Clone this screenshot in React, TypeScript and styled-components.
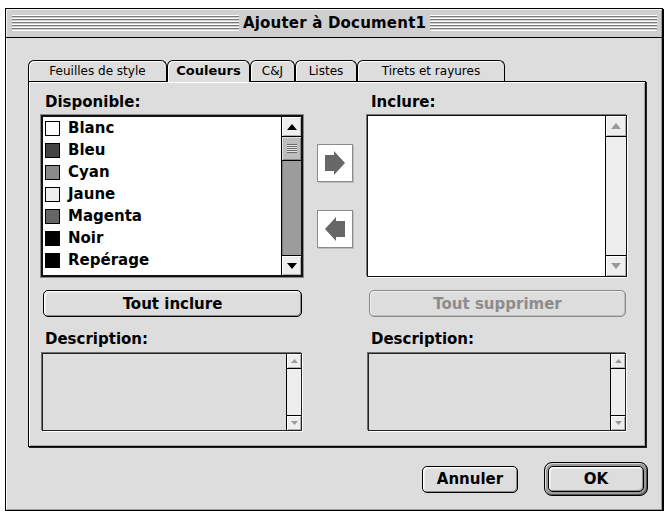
import React from "react";
import styled, { createGlobalStyle } from "styled-components";

const Global = createGlobalStyle`
  html, body { margin: 0; padding: 0; background: #ffffff; }
  body { font-family: "DejaVu Sans", "Liberation Sans", sans-serif; color: #000; }
  #root { padding: 8px 0 0 5px; }
  * { box-sizing: border-box; }
`;

const Window = styled.div`
  width: 658px;
  height: 503px;
  border: 1px solid #000;
  background: #dddddd;
  box-shadow: 1px 1px 0 #000, inset 1px 1px 0 #ffffff, inset -1px -1px 0 #9a9a9a;
  display: flex;
  flex-direction: column;
`;

const TitleBar = styled.div`
  height: 29px;
  flex: none;
  border-bottom: 1px solid #000;
  background: #cfcfcf;
  box-shadow: inset 1px 1px 0 #f2f2f2, inset -1px 0 0 #9a9a9a;
  display: flex;
  align-items: center;
  padding: 0 5px 0 6px;
  gap: 3px;
`;

const Stripes = styled.div`
  flex: 1;
  height: 16px;
  background: repeating-linear-gradient(
    to bottom,
    #ffffff 0px,
    #ffffff 1px,
    #7a7a7a 1px,
    #7a7a7a 2px,
    #cfcfcf 2px,
    #cfcfcf 3px
  );
`;

const Title = styled.div`
  font-weight: bold;
  font-size: 15px;
  letter-spacing: 0.2px;
  line-height: 18px;
  padding: 0 1px;
  white-space: nowrap;
`;

const Content = styled.div`
  flex: 1;
  display: flex;
  flex-direction: column;
  padding: 22px 16px 14px 22px;
`;

const TabRow = styled.div`
  display: flex;
  align-items: flex-end;
  height: 21px;
`;

const Tab = styled.div<{ $w: number; $active?: boolean }>`
  width: ${(p) => p.$w}px;
  height: ${(p) => (p.$active ? 22 : 21)}px;
  margin-bottom: ${(p) => (p.$active ? -1 : 0)}px;
  position: relative;
  z-index: ${(p) => (p.$active ? 1 : 0)};
  border: 1px solid #000;
  border-bottom: none;
  border-radius: 6px 6px 0 0;
  background: #dddddd;
  box-shadow: inset 1px 1px 0 #ffffff;
  display: flex;
  align-items: center;
  justify-content: center;
  padding-bottom: ${(p) => (p.$active ? 2 : 1)}px;
  font-size: ${(p) => (p.$active ? 13 : 12)}px;
  font-weight: ${(p) => (p.$active ? "bold" : "normal")};
  white-space: nowrap;
`;

const Panel = styled.div`
  height: 366px;
  border: 1px solid #000;
  box-shadow: 1px 1px 0 #222222, inset 1px 1px 0 #ffffff, inset -1px -1px 0 #a8a8a8;
  padding: 11px 17px 15px 12px;
  display: flex;
`;

const Column = styled.div<{ $w: number }>`
  width: ${(p) => p.$w}px;
  display: flex;
  flex-direction: column;
`;

const ArrowColumn = styled.div`
  width: 64px;
  display: flex;
  flex-direction: column;
  align-items: center;
  padding-top: 51px;
  gap: 28px;
`;

const Label = styled.div<{ $top?: number }>`
  font-weight: bold;
  font-size: 15px;
  line-height: 18px;
  margin-left: 4px;
  margin-top: ${(p) => p.$top ?? 0}px;
`;

const ListBox = styled.div<{ $focused?: boolean }>`
  height: 162px;
  margin-top: 4px;
  display: flex;
  background: #ffffff;
  border: ${(p) => (p.$focused ? "2px solid #111" : "1px solid #111")};
  box-shadow: ${(p) =>
    p.$focused ? "0 0 0 1px #8a8a8a" : "-1px -1px 0 #7a7a7a, 1px 1px 0 #ffffff"};
`;

const Items = styled.div`
  flex: 1;
  padding-left: 2px;
  display: flex;
  flex-direction: column;
`;

const Item = styled.div`
  height: 22px;
  display: flex;
  align-items: center;
  gap: 8px;
  font-weight: bold;
  font-size: 15px;
  white-space: nowrap;
`;

const Swatch = styled.span<{ $c: string }>`
  width: 15px;
  height: 15px;
  border: 1px solid #000;
  background: ${(p) => p.$c};
  flex: none;
`;

const ScrollBar = styled.div<{ $w: number }>`
  width: ${(p) => p.$w}px;
  flex: none;
  border-left: 1px solid #000;
  display: flex;
  flex-direction: column;
  background: #eeeeee;
`;

const ScrollArrow = styled.div<{ $h: number; $pos: "top" | "bottom" }>`
  height: ${(p) => p.$h}px;
  flex: none;
  background: #eeeeee;
  ${(p) => (p.$pos === "top" ? "border-bottom: 1px solid #000;" : "border-top: 1px solid #000;")}
  box-shadow: inset 1px 1px 0 #ffffff, inset -1px -1px 0 #b0b0b0;
  display: flex;
  align-items: center;
  justify-content: center;
`;

const Thumb = styled.div`
  height: 24px;
  flex: none;
  border-bottom: 1px solid #000;
  background: #bdbdbd;
  box-shadow: inset 1px 1px 0 #e0e0e0, inset -1px -1px 0 #888888;
  display: flex;
  align-items: center;
  justify-content: center;
`;

const Grip = styled.div`
  width: 10px;
  height: 9px;
  background: repeating-linear-gradient(
    to bottom,
    #6a6a6a 0px,
    #6a6a6a 1px,
    #e6e6e6 1px,
    #e6e6e6 2px
  );
`;

const Track = styled.div<{ $active?: boolean }>`
  flex: 1;
  background: ${(p) => (p.$active ? "#9c9c9c" : "#eeeeee")};
  box-shadow: ${(p) => (p.$active ? "inset 1px 0 0 #7a7a7a" : "none")};
`;

const PushButton = styled.button<{ $w?: number; $h?: number }>`
  width: ${(p) => (p.$w ? `${p.$w}px` : "auto")};
  height: ${(p) => p.$h ?? 27}px;
  border: 1px solid #000;
  border-radius: 5px;
  background: #dddddd;
  box-shadow: inset 1px 1px 0 #ffffff, inset -1px -1px 0 #8e8e8e, inset 2px 2px 0 #ececec;
  font-family: "DejaVu Sans", "Liberation Sans", sans-serif;
  font-weight: bold;
  font-size: 15px;
  color: #000;
  padding: 0;
  &:disabled {
    border-color: #8a8a8a;
    color: #8c8c8c;
    box-shadow: inset 1px 1px 0 #eeeeee, inset -1px -1px 0 #bcbcbc;
  }
`;

const WideButton = styled(PushButton)`
  margin: 13px 1px 0 2px;
`;

const ArrowButton = styled.div`
  width: 36px;
  height: 38px;
  background: #ffffff;
  border: 1px solid #8c8c8c;
  box-shadow: 1px 1px 0 #bdbdbd;
  display: flex;
  align-items: center;
  justify-content: center;
`;

const DescBox = styled.div`
  height: 78px;
  margin: 5px 1px 0 1px;
  display: flex;
  background: #dddddd;
  border: 1px solid #222;
  box-shadow: -1px -1px 0 #6e6e6e, 1px 1px 0 #ffffff;
`;

const DescArea = styled.div`
  flex: 1;
`;

const Footer = styled.div`
  display: flex;
  justify-content: flex-end;
  align-items: center;
  gap: 26px;
  margin-top: 15px;
  margin-right: -2px;
  height: 34px;
`;

const DefaultRing = styled.div`
  width: 104px;
  height: 34px;
  border: 1px solid #000;
  border-radius: 8px;
  padding: 3px;
  background: #9a9a9a;
  box-shadow: inset 1px 1px 0 #d8d8d8, inset -1px -1px 0 #555555;
  display: flex;
`;

const Tri = ({ dir, w, h, color }: { dir: "up" | "down"; w: number; h: number; color: string }) => (
  <svg width={w} height={h} viewBox={`0 0 ${w} ${h}`}>
    <polygon
      points={dir === "up" ? `0,${h} ${w / 2},0 ${w},${h}` : `0,0 ${w / 2},${h} ${w},0`}
      fill={color}
    />
  </svg>
);

const BlockArrow = ({ dir }: { dir: "left" | "right" }) => (
  <svg width={20} height={24} viewBox="0 0 20 24">
    <polygon
      points="0,4 9,4 9,0 20,12 9,24 9,20 0,20"
      fill="#676767"
      transform={dir === "left" ? "translate(20,0) scale(-1,1)" : undefined}
    />
  </svg>
);

const colors = [
  { name: "Blanc", c: "#ffffff" },
  { name: "Bleu", c: "#444444" },
  { name: "Cyan", c: "#8a8a8a" },
  { name: "Jaune", c: "#eeeeee" },
  { name: "Magenta", c: "#666666" },
  { name: "Noir", c: "#000000" },
  { name: "Repérage", c: "#000000" },
];

const tabs = [
  { label: "Feuilles de style", w: 139 },
  { label: "Couleurs", w: 83, active: true },
  { label: "C&J", w: 45 },
  { label: "Listes", w: 62 },
  { label: "Tirets et rayures", w: 148 },
];

const SmallScroll = () => (
  <ScrollBar $w={15}>
    <ScrollArrow $h={15} $pos="top">
      <Tri dir="up" w={7} h={4} color="#9a9a9a" />
    </ScrollArrow>
    <Track />
    <ScrollArrow $h={15} $pos="bottom">
      <Tri dir="down" w={7} h={4} color="#9a9a9a" />
    </ScrollArrow>
  </ScrollBar>
);

export default function App() {
  return (
    <>
      <Global />
      <Window>
        <TitleBar>
          <Stripes />
          <Title>Ajouter à Document1</Title>
          <Stripes />
        </TitleBar>
        <Content>
          <TabRow>
            {tabs.map((t) => (
              <Tab key={t.label} $w={t.w} $active={t.active}>
                {t.label}
              </Tab>
            ))}
          </TabRow>
          <Panel>
            <Column $w={262}>
              <Label>Disponible:</Label>
              <ListBox $focused>
                <Items>
                  {colors.map((c) => (
                    <Item key={c.name}>
                      <Swatch $c={c.c} />
                      {c.name}
                    </Item>
                  ))}
                </Items>
                <ScrollBar $w={20}>
                  <ScrollArrow $h={20} $pos="top">
                    <Tri dir="up" w={10} h={6} color="#000" />
                  </ScrollArrow>
                  <Thumb>
                    <Grip />
                  </Thumb>
                  <Track $active />
                  <ScrollArrow $h={20} $pos="bottom">
                    <Tri dir="down" w={10} h={6} color="#000" />
                  </ScrollArrow>
                </ScrollBar>
              </ListBox>
              <WideButton>Tout inclure</WideButton>
              <Label $top={13}>Description:</Label>
              <DescBox>
                <DescArea />
                <SmallScroll />
              </DescBox>
            </Column>
            <ArrowColumn>
              <ArrowButton>
                <BlockArrow dir="right" />
              </ArrowButton>
              <ArrowButton>
                <BlockArrow dir="left" />
              </ArrowButton>
            </ArrowColumn>
            <Column $w={260}>
              <Label>Inclure:</Label>
              <ListBox>
                <Items />
                <ScrollBar $w={21}>
                  <ScrollArrow $h={21} $pos="top">
                    <Tri dir="up" w={10} h={6} color="#9a9a9a" />
                  </ScrollArrow>
                  <Track />
                  <ScrollArrow $h={21} $pos="bottom">
                    <Tri dir="down" w={10} h={6} color="#9a9a9a" />
                  </ScrollArrow>
                </ScrollBar>
              </ListBox>
              <WideButton disabled>Tout supprimer</WideButton>
              <Label $top={13}>Description:</Label>
              <DescBox>
                <DescArea />
                <SmallScroll />
              </DescBox>
            </Column>
          </Panel>
          <Footer>
            <PushButton $w={96}>Annuler</PushButton>
            <DefaultRing>
              <PushButton $w={96} $h={26}>
                OK
              </PushButton>
            </DefaultRing>
          </Footer>
        </Content>
      </Window>
    </>
  );
}
